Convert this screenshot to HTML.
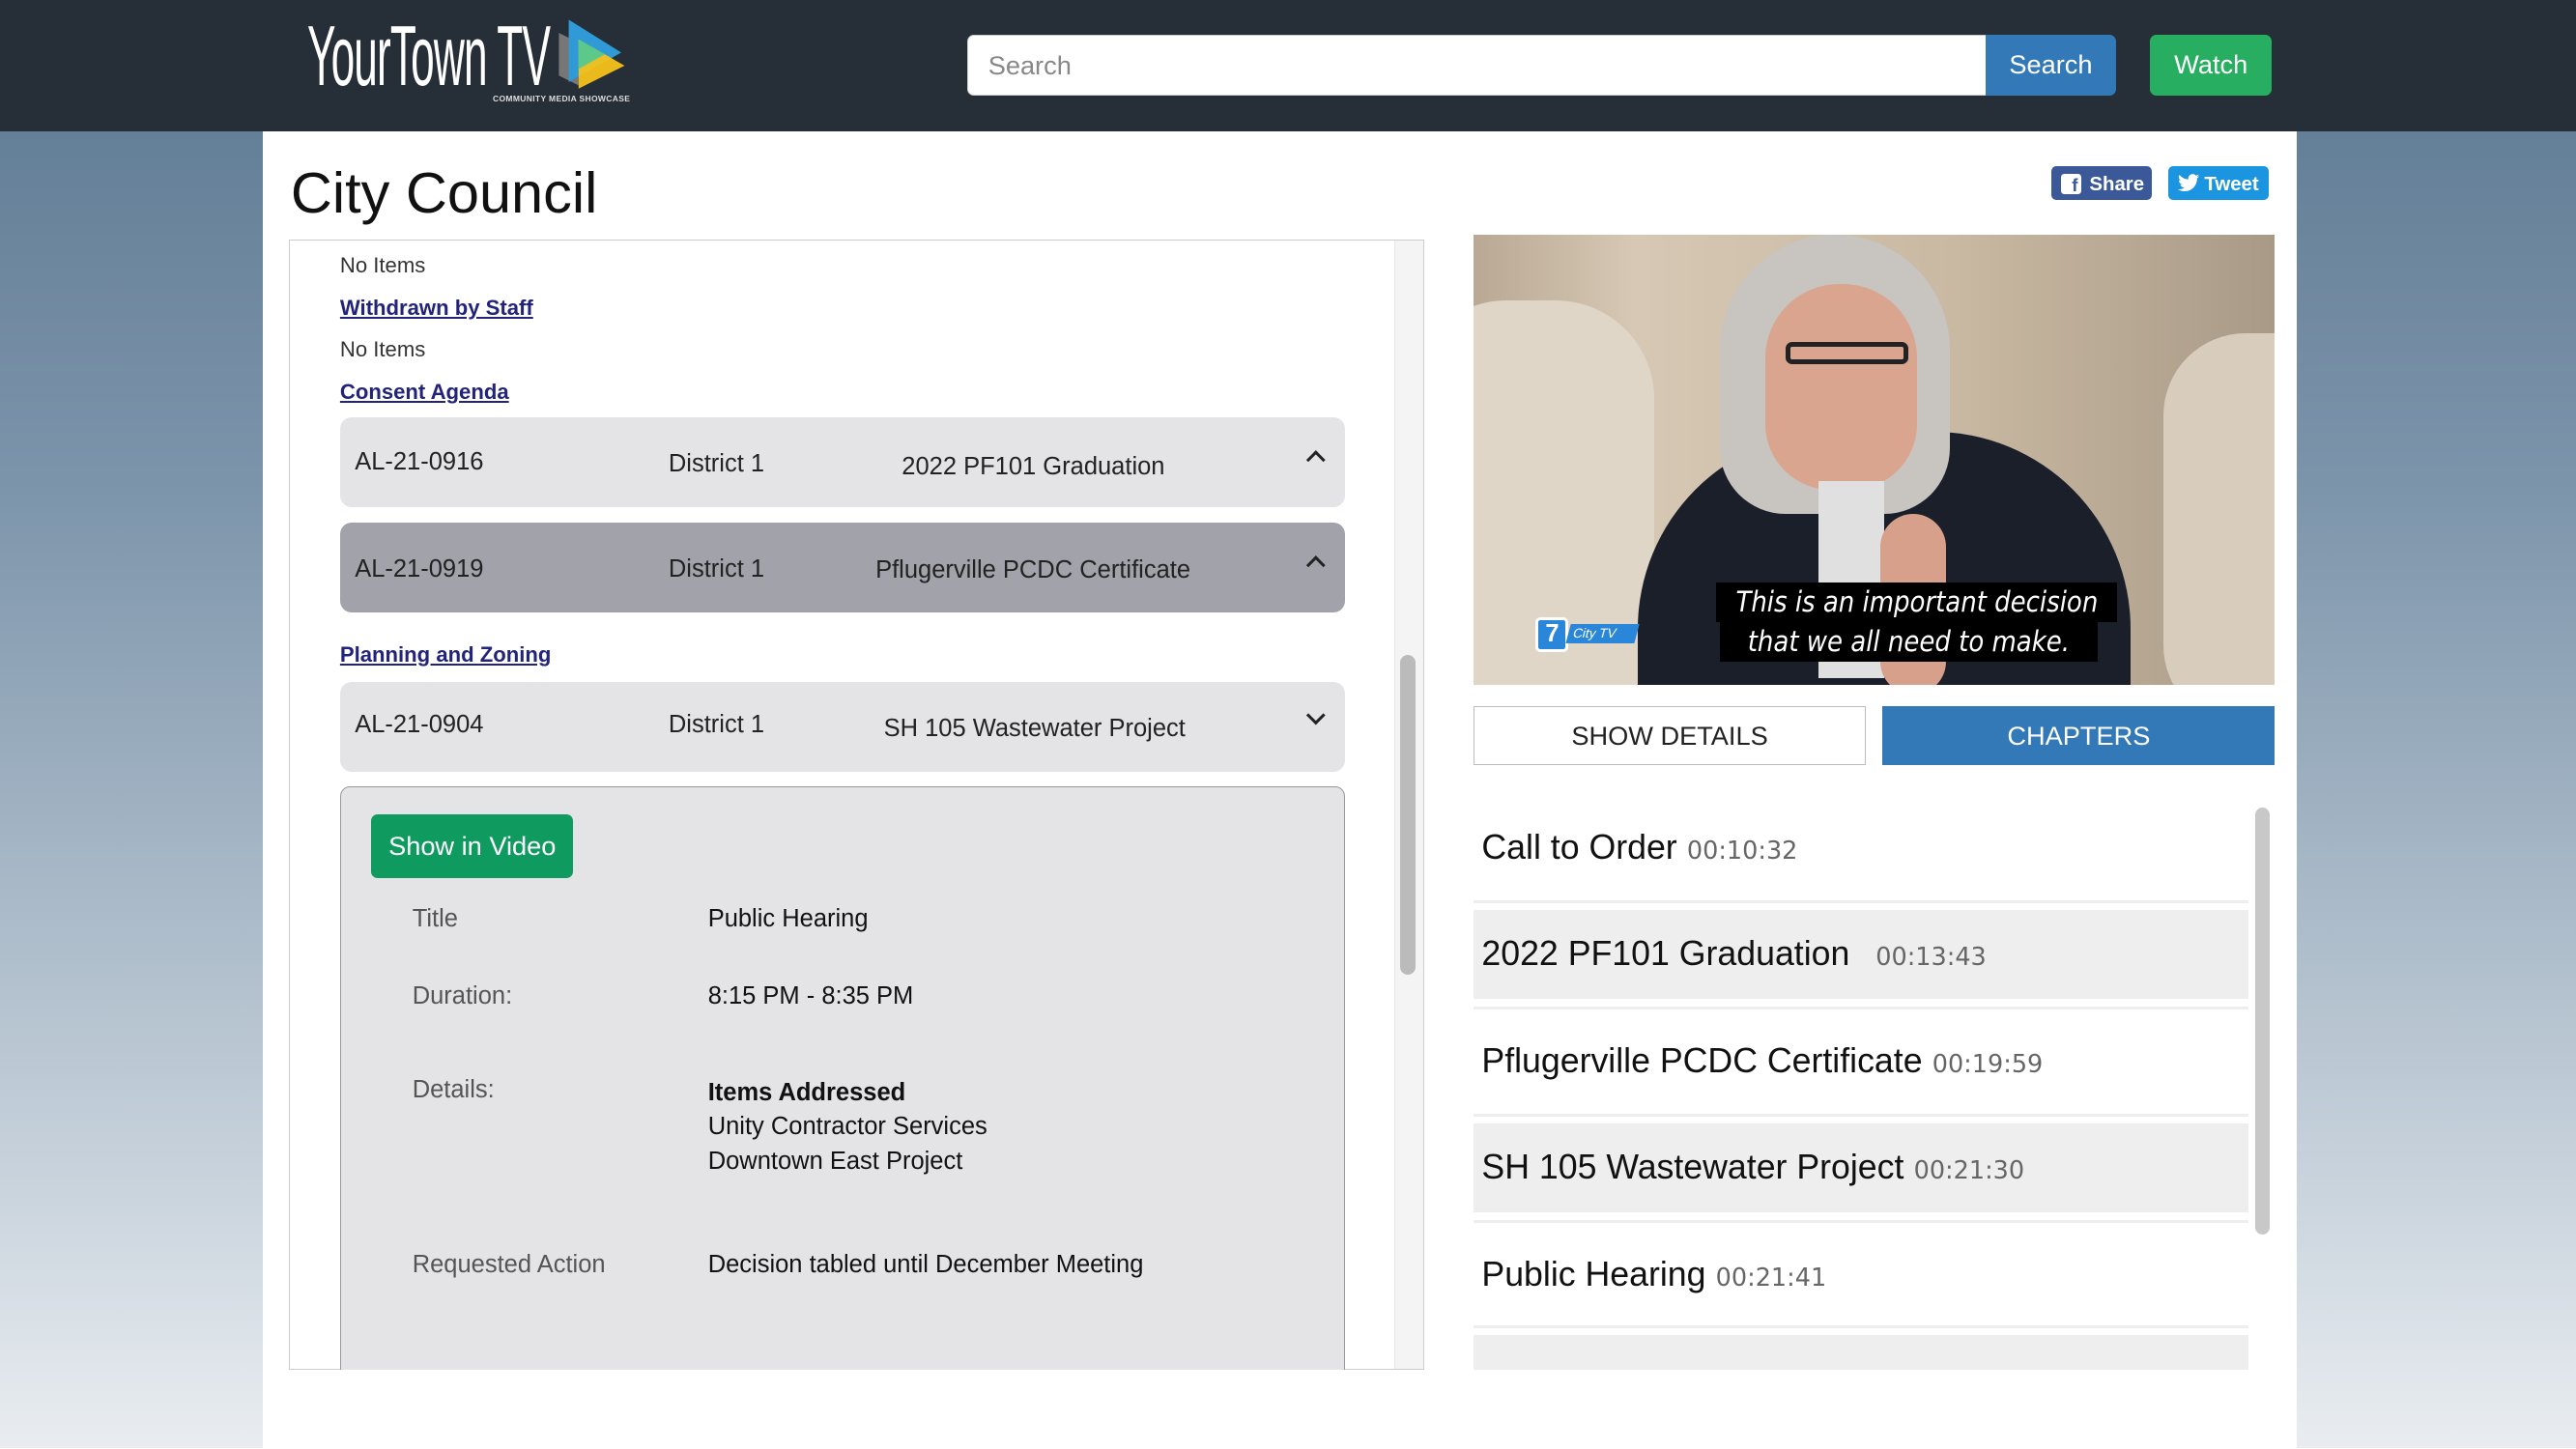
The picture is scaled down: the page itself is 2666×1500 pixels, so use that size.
<!DOCTYPE html>
<html><head><meta charset="utf-8"><style>
*{box-sizing:border-box;margin:0;padding:0}
html,body{width:2666px;height:1500px;overflow:hidden}
body{font-family:"Liberation Sans",Arial,sans-serif}
#w{zoom:1.7;width:1568px;height:882px;position:relative;background:linear-gradient(#5b7791 0px,#7d95ab 300px,#c5d0da 700px,#e9edf1 882px);overflow:hidden}
.a{position:absolute}
#hdr{left:0;top:0;width:1568px;height:80px;background:#262e37}
#main{left:160px;top:80px;width:1238px;height:802px;background:#fff}
.lnk{color:#22237a;text-decoration:underline;font-size:13px;font-weight:bold}
.ni{font-size:13px;color:#333}
.row{left:207px;width:612px;height:55px;border-radius:7px;background:#e4e4e6;font-size:15px;color:#222}
.row span{position:absolute;top:20px}
.chev{position:absolute;right:14px;top:22px;width:8px;height:8px;border-left:2px solid #222;border-top:2px solid #222;transform:rotate(45deg)}
.chev.d{transform:rotate(225deg);top:17px}
.ch{left:897px;width:472px;font-size:21px;color:#111}
.ch i{font-style:normal;font-size:15px;color:#666;margin-left:6px;font-family:"DejaVu Sans",sans-serif}
.lab{color:#555;font-size:15px}
.val{color:#111;font-size:15px}
</style></head><body><div id="w">
<div id="hdr" class="a">
 <div class="a" style="left:187px;top:4px;font-size:52px;color:#fff;transform:scaleX(.5);transform-origin:left;letter-spacing:-1px;white-space:nowrap">YourTown TV</div>
 <svg class="a" style="left:338px;top:10px" width="46" height="46" viewBox="0 0 46 46"><polygon points="2,10 14,16 14,42 2,36" fill="#777"/><polygon points="8,2 40,22 8,40" fill="#2f9ad6"/><polygon points="14,14 42,30 14,44" fill="#f4c21a" opacity=".95"/><polygon points="14,14 30,23 14,32" fill="#5cc98a"/></svg>
 <div class="a" style="left:300px;top:57px;font-size:5px;color:#ddd;font-weight:bold;letter-spacing:.2px">COMMUNITY MEDIA SHOWCASE</div>
 <div class="a" style="left:589px;top:21px;width:621px;height:37px;background:#fff;border:1px solid #ccc;border-radius:4px 0 0 4px;font-size:16px;color:#888;padding:9px 12px">Search</div>
 <div class="a" style="left:1209px;top:21px;width:79px;height:37px;background:#3379b7;border-radius:0 4px 4px 0;color:#fff;font-size:16px;text-align:center;line-height:36px">Search</div>
 <div class="a" style="left:1309px;top:21px;width:74px;height:37px;background:#27ae60;border-radius:4px;color:#fff;font-size:16px;text-align:center;line-height:36px">Watch</div>
</div>
<div id="main" class="a"></div>
<div class="a" style="left:177px;top:97px;font-size:35px;color:#111">City Council</div>
<div class="a" style="left:1249px;top:101px;width:61px;height:21px;background:#3b5998;border-radius:3px;color:#fff;font-size:12px;font-weight:bold;line-height:23px;padding-left:23px"><span class="a" style="left:6px;top:5px;width:12px;height:12px;background:#fff;border-radius:2px;color:#3b5998;font-size:11px;line-height:14px;text-align:right;padding-right:2px">f</span>Share</div>
<div class="a" style="left:1320px;top:101px;width:61px;height:21px;background:#1b95e0;border-radius:3px;color:#fff;font-size:12px;font-weight:bold;line-height:23px;padding-left:22px"><svg class="a" style="left:6px;top:5px" width="13" height="11" viewBox="0 0 24 20"><path d="M24 2.4a9.8 9.8 0 0 1-2.8.8A4.9 4.9 0 0 0 23.3.5a9.8 9.8 0 0 1-3.1 1.2A4.9 4.9 0 0 0 11.8 6 14 14 0 0 1 1.7.9a4.9 4.9 0 0 0 1.5 6.6A4.9 4.9 0 0 1 1 6.9a4.9 4.9 0 0 0 3.9 4.8 4.9 4.9 0 0 1-2.2.1 4.9 4.9 0 0 0 4.6 3.4A9.9 9.9 0 0 1 0 17.2 14 14 0 0 0 7.5 19.4c9.1 0 14-7.5 14-14v-.6A10 10 0 0 0 24 2.4z" fill="#fff"/></svg>Tweet</div>
<!-- left panel -->
<div class="a" style="left:176px;top:146px;width:691px;height:688px;border:1px solid #ccc;overflow:hidden;background:#fff">
 <div class="a" style="left:672px;top:0;width:18px;height:688px;background:#f4f4f4;border-left:1px solid #e6e6e6"></div>
 <div class="a" style="left:676px;top:252px;width:9px;height:195px;background:#bbb;border-radius:5px"></div>
</div>
<div class="a ni" style="left:207px;top:154px">No Items</div>
<div class="a lnk" style="left:207px;top:180px">Withdrawn by Staff</div>
<div class="a ni" style="left:207px;top:205px">No Items</div>
<div class="a lnk" style="left:207px;top:231px">Consent Agenda</div>
<div class="a row" style="top:254px"><span style="left:9px;top:19px">AL-21-0916</span><span style="left:200px">District 1</span><span style="left:342px;top:22px">2022 PF101 Graduation</span><div class="chev"></div></div>
<div class="a row" style="top:318px;background:#a2a2aa"><span style="left:9px">AL-21-0919</span><span style="left:200px">District 1</span><span style="left:326px;top:21px">Pflugerville PCDC Certificate</span><div class="chev"></div></div>
<div class="a lnk" style="left:207px;top:391px">Planning and Zoning</div>
<div class="a row" style="top:415px"><span style="left:9px;top:18px">AL-21-0904</span><span style="left:200px;top:18px">District 1</span><span style="left:331px;top:20px">SH 105 Wastewater Project</span><div class="chev d"></div></div>
<div class="a" style="left:207px;top:479px;width:612px;height:360px;background:#e4e4e6;border:1px solid #999;border-radius:6px 6px 0 0"></div>
<div class="a" style="left:226px;top:496px;width:123px;height:39px;background:#0f9a60;border-radius:4px;color:#fff;font-size:16px;text-align:center;line-height:39px">Show in Video</div>
<div class="a lab" style="left:251px;top:551px">Title</div><div class="a val" style="left:431px;top:551px">Public Hearing</div>
<div class="a lab" style="left:251px;top:598px">Duration:</div><div class="a val" style="left:431px;top:598px">8:15 PM - 8:35 PM</div>
<div class="a lab" style="left:251px;top:655px">Details:</div><div class="a val" style="left:431px;top:655px;line-height:21px"><b>Items Addressed</b><br>Unity Contractor Services<br>Downtown East Project</div>
<div class="a lab" style="left:251px;top:762px">Requested Action</div><div class="a val" style="left:431px;top:762px">Decision tabled until December Meeting</div>
<div class="a" style="left:160px;top:834px;width:1238px;height:48px;background:#fff"></div>
<!-- video -->
<div class="a" style="left:897px;top:143px;width:488px;height:274px;overflow:hidden;background:linear-gradient(90deg,#b9a894 0%,#d6c8b4 20%,#c9b9a2 60%,#a99a88 100%)">
 <div class="a" style="left:-40px;top:40px;width:150px;height:260px;background:#e0d6c8;border-radius:60px"></div>
 <div class="a" style="left:420px;top:60px;width:120px;height:240px;background:#d8ccbc;border-radius:50px"></div>
 <div class="a" style="left:100px;top:120px;width:300px;height:200px;background:#1b1f2a;border-radius:120px 120px 0 0"></div>
 <div class="a" style="left:150px;top:0;width:140px;height:170px;background:#c8c4c0;border-radius:70px 70px 40px 40px"></div>
 <div class="a" style="left:178px;top:30px;width:92px;height:125px;background:#d9a58f;border-radius:45px 45px 40px 40px"></div>
 <div class="a" style="left:190px;top:65px;width:75px;height:14px;border:3px solid #222;border-radius:4px"></div>
 <div class="a" style="left:210px;top:150px;width:40px;height:120px;background:#e0e0e0"></div>
 <div class="a" style="left:248px;top:170px;width:40px;height:110px;background:#d6a08a;border-radius:20px"></div>
 <div class="a" style="left:148px;top:212px;width:244px;height:24px;background:#000;color:#fff;font-style:italic;font-size:17px;text-align:center;line-height:24px;font-family:'DejaVu Sans Condensed','Liberation Sans',sans-serif">This is an important decision</div>
 <div class="a" style="left:150px;top:236px;width:230px;height:24px;background:#000;color:#fff;font-style:italic;font-size:17px;text-align:center;line-height:24px;font-family:'DejaVu Sans Condensed','Liberation Sans',sans-serif">that we all need to make.</div>
 <div class="a" style="left:38px;top:233px;width:20px;height:21px;background:#2a86d8;border:2px solid #fff;border-radius:3px;color:#fff;font-weight:bold;font-size:15px;line-height:17px;text-align:center">7</div>
 <div class="a" style="left:58px;top:237px;width:42px;height:12px;background:#2a86d8;color:#fff;font-size:8px;line-height:12px;padding-left:3px;transform:skewX(-15deg)">City TV</div>
</div>
<div class="a" style="left:897px;top:430px;width:239px;height:36px;border:1px solid #bbb;font-size:16px;text-align:center;line-height:35px;color:#222">SHOW DETAILS</div>
<div class="a" style="left:1146px;top:430px;width:239px;height:36px;background:#3379b7;font-size:16px;text-align:center;line-height:36px;color:#fff">CHAPTERS</div>
<!-- chapters -->
<div class="a" style="left:1369px;top:489px;width:16px;height:345px;background:#fff"></div>
<div class="a" style="left:1373px;top:492px;width:9px;height:260px;background:#c8c8c8;border-radius:5px"></div>
<div class="a" style="left:897px;top:548px;width:472px;height:2px;background:#eee"></div>
<div class="a" style="left:897px;top:554px;width:472px;height:54px;background:#eee"></div>
<div class="a" style="left:897px;top:613px;width:472px;height:2px;background:#eee"></div>
<div class="a" style="left:897px;top:678px;width:472px;height:2px;background:#eee"></div>
<div class="a" style="left:897px;top:684px;width:472px;height:54px;background:#eee"></div>
<div class="a" style="left:897px;top:743px;width:472px;height:2px;background:#eee"></div>
<div class="a" style="left:897px;top:807px;width:472px;height:2px;background:#eee"></div>
<div class="a" style="left:897px;top:813px;width:472px;height:21px;background:#eee"></div>
<div class="a ch" style="left:902px;top:504px">Call to Order<i>00:10:32</i></div>
<div class="a ch" style="left:902px;top:569px">2022 PF101 Graduation <i style="margin-left:10px">00:13:43</i></div>
<div class="a ch" style="left:902px;top:634px">Pflugerville PCDC Certificate<i>00:19:59</i></div>
<div class="a ch" style="left:902px;top:699px">SH 105 Wastewater Project<i>00:21:30</i></div>
<div class="a ch" style="left:902px;top:764px">Public Hearing<i>00:21:41</i></div>
</div></body></html>
